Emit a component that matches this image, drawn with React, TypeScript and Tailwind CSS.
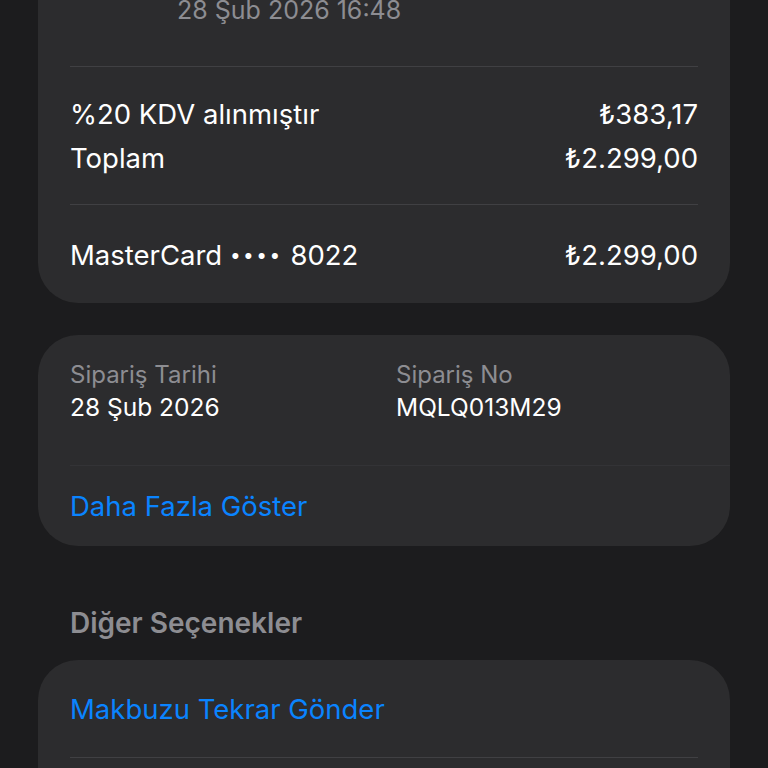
import React from 'react';

const font = { fontFamily: 'Inter, "Noto Sans", sans-serif' };

const Row = ({ left, right }: { left: React.ReactNode; right: string }) => (
  <div className="flex items-center justify-between h-[44px] text-[27.5px] text-white">
    <span>{left}</span>
    <span>{right}</span>
  </div>
);

const App: React.FC = () => {
  return (
    <div className="w-[768px] h-[768px] overflow-hidden bg-[#1c1c1e] px-[38px]" style={font}>
      {/* özet kartı, üstü kesik */}
      <div className="-mt-[40px] bg-[#2c2c2e] rounded-[40px] px-[32px] pb-[25px]">
        <div className="pt-[34px] h-[68px] flex items-center pl-[107px] text-[25px] text-[#8d8d92]">
          28 Şub 2026 16:48
        </div>
        <div className="mt-[38px] h-px bg-[#404043]" />
        <div className="pt-[26px]">
          <Row left="%20 KDV alınmıştır" right="₺383,17" />
          <Row left="Toplam" right="₺2.299,00" />
        </div>
        <div className="mt-[23px] h-px bg-[#404043]" />
        <div className="pt-[29px]">
          <Row
            left={
              <>
                MasterCard <span className="text-[19px] tracking-[2.5px] align-[3px]">••••</span> 8022
              </>
            }
            right="₺2.299,00"
          />
        </div>
      </div>

      {/* sipariş bilgisi */}
      <div className="mt-[32px] bg-[#2c2c2e] rounded-[40px] pl-[32px] pt-[24px] pb-[17px]">
        <div className="grid grid-cols-[326px_1fr]">
          <div>
            <div className="h-[32px] flex items-center text-[24px] text-[#8d8d92]">Sipariş Tarihi</div>
            <div className="h-[32px] flex items-center text-[24.5px] text-white">28 Şub 2026</div>
          </div>
          <div>
            <div className="h-[32px] flex items-center text-[24px] text-[#8d8d92]">Sipariş No</div>
            <div className="h-[32px] flex items-center text-[24.5px] text-white">MQLQ013M29</div>
          </div>
        </div>
        <div className="mt-[42px] h-px bg-[#333336]" />
        <div className="mt-[19px] h-[44px] flex items-center text-[27.5px] text-[#0a84ff]">
          Daha Fazla Göster
        </div>
      </div>

      <div className="mt-[61px] h-[32px] px-[32px] flex items-center text-[28px] font-semibold text-[#8d8d92]">
        Diğer Seçenekler
      </div>

      <div className="mt-[21px] bg-[#2c2c2e] rounded-t-[40px] px-[32px] pt-[28px] pb-[40px]">
        <div className="h-[44px] flex items-center text-[27.5px] text-[#0a84ff]">
          Makbuzu Tekrar Gönder
        </div>
        <div className="mt-[25px] h-px bg-[#404043]" />
        <div className="h-[60px]" />
      </div>
    </div>
  );
};

export default App;
